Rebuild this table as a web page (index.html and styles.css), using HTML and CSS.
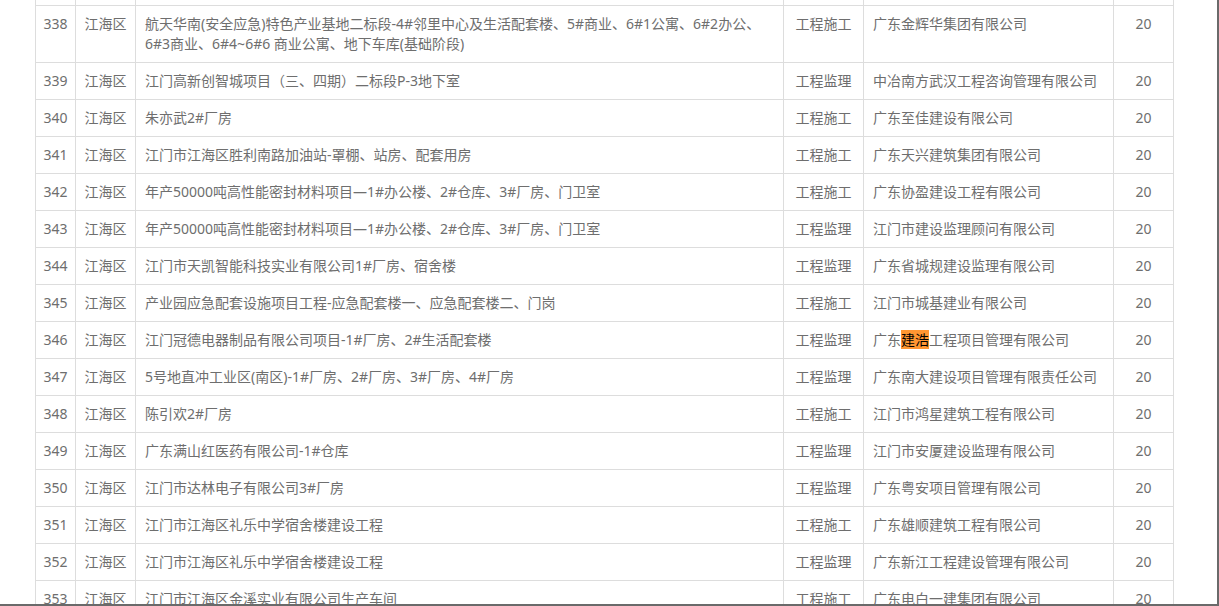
FILE: index.html
```html
<!DOCTYPE html>
<html lang="zh-CN">
<head>
<meta charset="utf-8">
<title>名单</title>
<link rel="stylesheet" href="styles.css">
</head>
<body>
<div class="frame">
  <div class="viewport">
    <table class="list">
      <colgroup>
        <col class="c-no"><col class="c-area"><col class="c-name"><col class="c-type"><col class="c-co"><col class="c-score">
      </colgroup>
      <tbody>
        <tr class="cut"><td></td><td></td><td></td><td></td><td></td><td></td></tr>
        <tr><td class="ctr">338</td><td class="ctr">江海区</td><td>航天华南(安全应急)特色产业基地二标段-4#邻里中心及生活配套楼、5#商业、6#1公寓、6#2办公、6#3商业、6#4~6#6 商业公寓、地下车库(基础阶段)</td><td class="ctr">工程施工</td><td>广东金辉华集团有限公司</td><td class="ctr">20</td></tr>
        <tr><td class="ctr">339</td><td class="ctr">江海区</td><td>江门高新创智城项目（三、四期）二标段P-3地下室</td><td class="ctr">工程监理</td><td>中冶南方武汉工程咨询管理有限公司</td><td class="ctr">20</td></tr>
        <tr><td class="ctr">340</td><td class="ctr">江海区</td><td>朱亦武2#厂房</td><td class="ctr">工程施工</td><td>广东至佳建设有限公司</td><td class="ctr">20</td></tr>
        <tr><td class="ctr">341</td><td class="ctr">江海区</td><td>江门市江海区胜利南路加油站-罩棚、站房、配套用房</td><td class="ctr">工程施工</td><td>广东天兴建筑集团有限公司</td><td class="ctr">20</td></tr>
        <tr><td class="ctr">342</td><td class="ctr">江海区</td><td>年产50000吨高性能密封材料项目—1#办公楼、2#仓库、3#厂房、门卫室</td><td class="ctr">工程施工</td><td>广东协盈建设工程有限公司</td><td class="ctr">20</td></tr>
        <tr><td class="ctr">343</td><td class="ctr">江海区</td><td>年产50000吨高性能密封材料项目—1#办公楼、2#仓库、3#厂房、门卫室</td><td class="ctr">工程监理</td><td>江门市建设监理顾问有限公司</td><td class="ctr">20</td></tr>
        <tr><td class="ctr">344</td><td class="ctr">江海区</td><td>江门市天凯智能科技实业有限公司1#厂房、宿舍楼</td><td class="ctr">工程监理</td><td>广东省城规建设监理有限公司</td><td class="ctr">20</td></tr>
        <tr><td class="ctr">345</td><td class="ctr">江海区</td><td>产业园应急配套设施项目工程-应急配套楼一、应急配套楼二、门岗</td><td class="ctr">工程施工</td><td>江门市城基建业有限公司</td><td class="ctr">20</td></tr>
        <tr><td class="ctr">346</td><td class="ctr">江海区</td><td>江门冠德电器制品有限公司项目-1#厂房、2#生活配套楼</td><td class="ctr">工程监理</td><td>广东<mark class="hit">建浩</mark>工程项目管理有限公司</td><td class="ctr">20</td></tr>
        <tr><td class="ctr">347</td><td class="ctr">江海区</td><td>5号地直冲工业区(南区)-1#厂房、2#厂房、3#厂房、4#厂房</td><td class="ctr">工程监理</td><td>广东南大建设项目管理有限责任公司</td><td class="ctr">20</td></tr>
        <tr><td class="ctr">348</td><td class="ctr">江海区</td><td>陈引欢2#厂房</td><td class="ctr">工程施工</td><td>江门市鸿星建筑工程有限公司</td><td class="ctr">20</td></tr>
        <tr><td class="ctr">349</td><td class="ctr">江海区</td><td>广东满山红医药有限公司-1#仓库</td><td class="ctr">工程监理</td><td>江门市安厦建设监理有限公司</td><td class="ctr">20</td></tr>
        <tr><td class="ctr">350</td><td class="ctr">江海区</td><td>江门市达林电子有限公司3#厂房</td><td class="ctr">工程监理</td><td>广东粤安项目管理有限公司</td><td class="ctr">20</td></tr>
        <tr><td class="ctr">351</td><td class="ctr">江海区</td><td>江门市江海区礼乐中学宿舍楼建设工程</td><td class="ctr">工程施工</td><td>广东雄顺建筑工程有限公司</td><td class="ctr">20</td></tr>
        <tr><td class="ctr">352</td><td class="ctr">江海区</td><td>江门市江海区礼乐中学宿舍楼建设工程</td><td class="ctr">工程监理</td><td>广东新江工程建设管理有限公司</td><td class="ctr">20</td></tr>
        <tr><td class="ctr">353</td><td class="ctr">江海区</td><td>江门市江海区金溪实业有限公司生产车间</td><td class="ctr">工程施工</td><td>广东电白一建集团有限公司</td><td class="ctr">20</td></tr>
      </tbody>
    </table>
  </div>
</div>
</body>
</html>
```

FILE: styles.css
```css
html, body {
  margin: 0;
  padding: 0;
  background: #ffffff;
}

.frame {
  width: 1219px;
  height: 606px;
  box-sizing: border-box;
  border-right: 2px solid #6a6a6a;
  border-bottom: 2px solid #6a6a6a;
  overflow: hidden;
}

.viewport {
  padding-left: 35px;
}

.list {
  border-collapse: collapse;
  table-layout: fixed;
  width: 1139px;
  margin-top: 0;
  font-family: "Noto Sans", "Noto Sans CJK SC", sans-serif;
  font-size: 14px;
  line-height: 20px;
  color: #6e6e6e;
}

.c-no { width: 40px; }
.c-area { width: 60px; }
.c-name { width: 648px; }
.c-type { width: 80px; }
.c-co { width: 250px; }
.c-score { width: 60px; }

.list td {
  border: 1px solid #dddddd;
  padding: 8px 9px;
  vertical-align: top;
  text-align: left;
}

.list td.ctr {
  text-align: center;
  padding-left: 2px;
  padding-right: 2px;
}

.list tr.cut td {
  height: 5px;
  padding: 0;
  border-top: none;
}

.hit {
  background: #ff9632;
  color: #000000;
}
```
